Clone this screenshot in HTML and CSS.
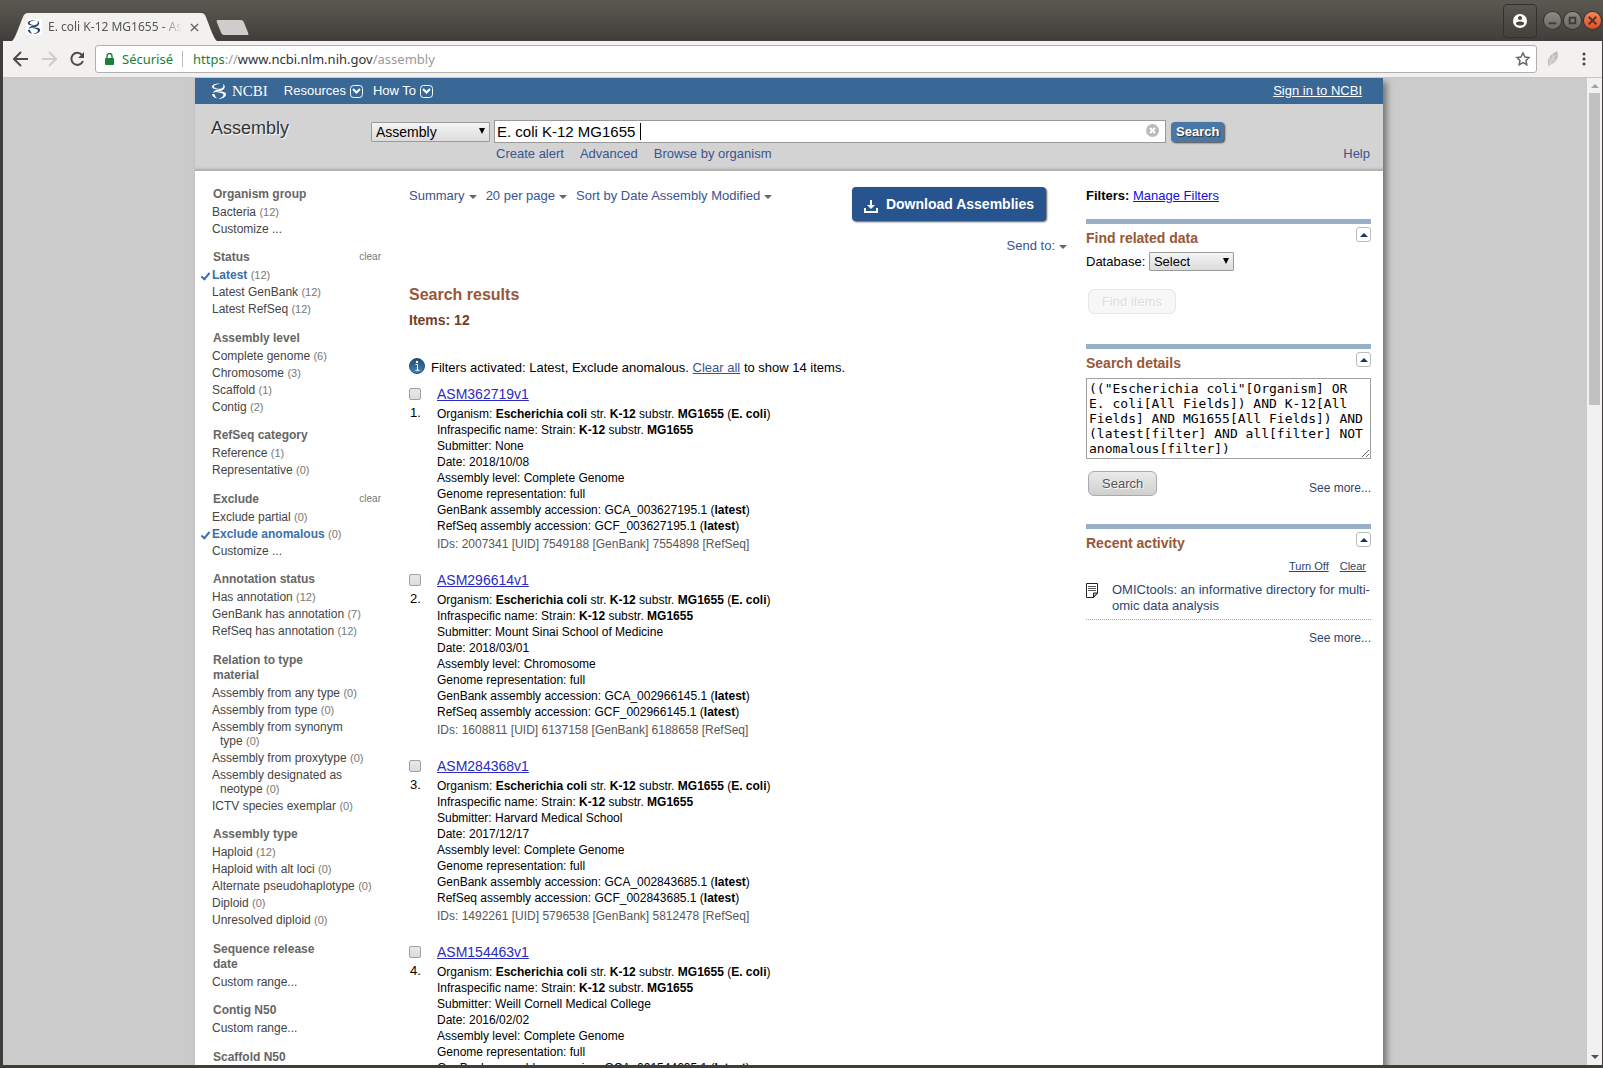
FILE: index.html
```html
<!DOCTYPE html>
<html lang="en">
<head>
<meta charset="UTF-8">
<meta name="viewport" content="width=device-width, initial-scale=1.0">
<title>E. coli K-12 MG1655 - Assembly - NCBI</title>
<link rel="stylesheet" href="styles.css">
</head>
<body>
<svg class="defs" aria-hidden="true">
    <symbol id="helix" viewBox="0 0 16 18">
        <path d="M10 1.500C5 1 1 2.500 1 4.500c0 3 5 3 9 2.500-4-.3-7-1-7-2.500S6 2.300 10 1.500z"/>
        <path d="M12 2c3 1.500 2 5-1 6.500-3 1.300-7 1-9 2.500 1-3 4-3.300 7-4 3-.8 4-2.500 3-5z"/>
        <path d="M5 10c4-1 10-.8 10 2.500 0 2.500-4 4.500-8 4.500 3-1 5.500-2.500 5.500-4 0-2-4-2.500-7.500-3z"/>
        <path d="M1 12c0 2 2 4 5 4.500-1-1.500-2-2-2.500-4.500z"/>
    </symbol>
</svg>

<!-- window frame -->
<header class="titlebar">
    <div class="tab">
        <svg class="tab_shape" viewBox="0 0 205 28" preserveAspectRatio="none"><path d="M0 28 C4 25 9 7 12 2 Q13 0 16 0 H189 Q192 0 193 2 C196 8 201 25 205 28z"/></svg>
        <span class="favicon"><svg><use href="#helix"/></svg></span>
        <span class="tab_title">E. coli K-12 MG1655 - As</span>
        <button class="tab_close" aria-label="Close tab"><svg viewBox="0 0 10 10"><path d="M1 1l8 8M9 1l-8 8"/></svg></button>
    </div>
    <button class="new_tab" aria-label="New tab"></button>
    <div class="win_buttons">
        <button class="profile" aria-label="Profile"><svg viewBox="0 0 14 14"><circle cx="7" cy="7" r="7" fill="#fff"/><circle cx="7" cy="4" r="2" fill="#45443f"/><path d="M3 9c1-2 7-2 8 0v1c-2 2-6 2-8 0z" fill="#45443f"/></svg></button>
        <button class="win" aria-label="Minimize"><svg viewBox="0 0 18 18"><path d="M5 12h8"/></svg></button>
        <button class="win" aria-label="Maximize"><svg viewBox="0 0 18 18"><rect x="6" y="6" width="6" height="6"/></svg></button>
        <button class="win close" aria-label="Close"><svg viewBox="0 0 18 18"><path d="M5 5l8 8M13 5l-8 8"/></svg></button>
    </div>
</header>

<div class="browser">
    <nav class="toolbar">
        <button aria-label="Back"><svg viewBox="0 0 16 16"><path d="M15 8H2M8 1L1 8l7 7"/></svg></button>
        <button class="off" aria-label="Forward"><svg viewBox="0 0 16 16"><path d="M1 8h13M8 1l7 7-7 7"/></svg></button>
        <button class="reload" aria-label="Reload"><svg viewBox="0 0 16 16"><path d="M13 4a6 6 0 1 0 1 6"/><path class="fill" d="M15 1v6H9z"/></svg></button>
        <div class="omnibox">
            <svg class="lock" viewBox="0 0 9 12"><path d="M2 5V3a2 2 0 0 1 5 0v2" fill="none" stroke="#188038" stroke-width="1.4"/><rect y="5" width="9" height="7" rx="1" fill="#188038"/></svg>
            <span class="secure">Sécurisé</span>
            <span class="url"><b>https</b>://<i>www.ncbi.nlm.nih.gov</i>/assembly</span>
            <svg class="star" viewBox="0 0 16 16"><path d="M8 2l2 4 4 .5-3 3 .8 4.200L8 11.500l-3.800 2.200L5 9.500l-3-3L6 6z"/></svg>
        </div>
        <svg class="feather" viewBox="0 0 12 16"><path d="M1 16L1 9C2 5 6 2 10 0c2 5 1 11-7 14z" fill="#bdbdbd"/><path d="M1 16C3 11 6 7 9 4M3 12h4M4 9h5M3 10V6M6 7V3" stroke="#dedede" fill="none"/></svg>
        <button class="menu" aria-label="Menu"><svg viewBox="0 0 4 14"><circle cx="2" cy="2" r="1.500"/><circle cx="2" cy="7" r="1.500"/><circle cx="2" cy="12" r="1.500"/></svg></button>
    </nav>

    <div class="viewport">
        <div class="scroll_area">
        <div class="page">
            <div class="topbar">
                <a class="logo" href="#"><svg><use href="#helix"/></svg>NCBI</a>
                <a href="#">Resources <svg class="drop" viewBox="0 0 13 13"><rect x=".5" y=".5" width="12" height="12" rx="3"/><path d="M3 4l3.500 3.500L10 4"/></svg></a>
                <a href="#">How To <svg class="drop" viewBox="0 0 13 13"><rect x=".5" y=".5" width="12" height="12" rx="3"/><path d="M3 4l3.500 3.500L10 4"/></svg></a>
                <a class="signin" href="#">Sign in to NCBI</a>
            </div>

            <form class="search">
                <h1>Assembly</h1>
                <div class="search_body">
                    <div class="search_row">
                        <span class="select big"><select aria-label="Search database"><option>Assembly</option></select></span>
                        <span class="term">
                            <input type="text" aria-label="Search term" value="E. coli K-12 MG1655 ">
                            <button class="reset" type="button" aria-label="Clear input"><svg viewBox="0 0 13 13"><circle cx="6.500" cy="6.500" r="6.500" fill="#bbb"/><path d="M4 4l5 5M9 4l-5 5" stroke="#fff" stroke-width="2"/></svg></button>
                        </span>
                        <button class="go" type="button">Search</button>
                    </div>
                    <div class="search_links">
                        <a href="#">Create alert</a>
                        <a href="#">Advanced</a>
                        <a href="#">Browse by organism</a>
                        <a class="help" href="#">Help</a>
                    </div>
                </div>
            </form>

            <div class="columns">
                <div class="facets">
                    <section>
                        <h3>Organism group</h3>
                        <ul>
                            <li><a href="#">Bacteria</a>&nbsp;<span>(12)</span></li>
                            <li><a href="#">Customize ...</a></li>
                        </ul>
                    </section>
                    <section>
                        <h3>Status</h3><a class="clear" href="#">clear</a>
                        <ul>
                            <li class="on"><a href="#">Latest</a>&nbsp;<span>(12)</span></li>
                            <li><a href="#">Latest GenBank</a>&nbsp;<span>(12)</span></li>
                            <li><a href="#">Latest RefSeq</a>&nbsp;<span>(12)</span></li>
                        </ul>
                    </section>
                    <section>
                        <h3>Assembly level</h3>
                        <ul>
                            <li><a href="#">Complete genome</a>&nbsp;<span>(6)</span></li>
                            <li><a href="#">Chromosome</a>&nbsp;<span>(3)</span></li>
                            <li><a href="#">Scaffold</a>&nbsp;<span>(1)</span></li>
                            <li><a href="#">Contig</a>&nbsp;<span>(2)</span></li>
                        </ul>
                    </section>
                    <section>
                        <h3>RefSeq category</h3>
                        <ul>
                            <li><a href="#">Reference</a>&nbsp;<span>(1)</span></li>
                            <li><a href="#">Representative</a>&nbsp;<span>(0)</span></li>
                        </ul>
                    </section>
                    <section>
                        <h3>Exclude</h3><a class="clear" href="#">clear</a>
                        <ul>
                            <li><a href="#">Exclude partial</a>&nbsp;<span>(0)</span></li>
                            <li class="on"><a href="#">Exclude anomalous</a>&nbsp;<span>(0)</span></li>
                            <li><a href="#">Customize ...</a></li>
                        </ul>
                    </section>
                    <section>
                        <h3>Annotation status</h3>
                        <ul>
                            <li><a href="#">Has annotation</a>&nbsp;<span>(12)</span></li>
                            <li><a href="#">GenBank has annotation</a>&nbsp;<span>(7)</span></li>
                            <li><a href="#">RefSeq has annotation</a>&nbsp;<span>(12)</span></li>
                        </ul>
                    </section>
                    <section>
                        <h3>Relation to type material</h3>
                        <ul>
                            <li><a href="#">Assembly from any type</a>&nbsp;<span>(0)</span></li>
                            <li><a href="#">Assembly from type</a>&nbsp;<span>(0)</span></li>
                            <li><a href="#">Assembly from synonym type</a>&nbsp;<span>(0)</span></li>
                            <li><a href="#">Assembly from proxytype</a>&nbsp;<span>(0)</span></li>
                            <li><a href="#">Assembly designated as neotype</a>&nbsp;<span>(0)</span></li>
                            <li><a href="#">ICTV species exemplar</a>&nbsp;<span>(0)</span></li>
                        </ul>
                    </section>
                    <section>
                        <h3>Assembly type</h3>
                        <ul>
                            <li><a href="#">Haploid</a>&nbsp;<span>(12)</span></li>
                            <li><a href="#">Haploid with alt loci</a>&nbsp;<span>(0)</span></li>
                            <li><a href="#">Alternate pseudohaplotype</a>&nbsp;<span>(0)</span></li>
                            <li><a href="#">Diploid</a>&nbsp;<span>(0)</span></li>
                            <li><a href="#">Unresolved diploid</a>&nbsp;<span>(0)</span></li>
                        </ul>
                    </section>
                    <section>
                        <h3>Sequence release date</h3>
                        <ul>
                            <li><a href="#">Custom range...</a></li>
                        </ul>
                    </section>
                    <section>
                        <h3>Contig N50</h3>
                        <ul>
                            <li><a href="#">Custom range...</a></li>
                        </ul>
                    </section>
                    <section>
                        <h3>Scaffold N50</h3>
                    </section>
                </div>

                <main class="results">
                    <div class="display_bar">
                        <a class="pop" href="#">Summary</a>
                        <a class="pop" href="#">20 per page</a>
                        <a class="pop" href="#">Sort by Date Assembly Modified</a>
                        <button class="download"><svg viewBox="0 0 14 14"><path d="M1 9v4h12V9" fill="none" stroke="#fff" stroke-width="2"/><path d="M6 1h2v5h3L7 10 3 6h3z" fill="#fff"/></svg>Download Assemblies</button>
                    </div>
                    <div class="send"><a class="pop" href="#">Send to:</a></div>
                    <h2>Search results</h2>
                    <h3>Items: 12</h3>
                    <p class="notice"><svg viewBox="0 0 16 16"><defs><linearGradient id="ig" x2="0" y2="1"><stop stop-color="#1f4a75"/><stop offset="1" stop-color="#4488b5"/></linearGradient></defs><circle cx="8" cy="8" r="7.500" fill="url(#ig)" stroke="#27496b"/><circle cx="8" cy="4" r="1.200" fill="#fff"/><path d="M6.500 6.500h2v5.500M6.500 12.300h4" stroke="#fff" fill="none"/></svg>Filters activated: Latest, Exclude anomalous. <a href="#">Clear all</a> to show 14 items.</p>

                    <article class="rprt">
                        <div class="num"><input type="checkbox" id="r1"><label for="r1">1.</label></div>
                        <div class="rslt">
                            <a class="title" href="#">ASM362719v1</a>
                            <p>Organism: <b>Escherichia coli</b> str. <b>K-12</b> substr. <b>MG1655</b> (<b>E. coli</b>)</p>
                            <p>Infraspecific name: Strain: <b>K-12</b> substr. <b>MG1655</b></p>
                            <p>Submitter: None</p>
                            <p>Date: 2018/10/08</p>
                            <p>Assembly level: Complete Genome</p>
                            <p>Genome representation: full</p>
                            <p>GenBank assembly accession: GCA_003627195.1 (<b>latest</b>)</p>
                            <p>RefSeq assembly accession: GCF_003627195.1 (<b>latest</b>)</p>
                            <p class="ids">IDs: 2007341 [UID] 7549188 [GenBank] 7554898 [RefSeq]</p>
                        </div>
                    </article>
                    <article class="rprt">
                        <div class="num"><input type="checkbox" id="r2"><label for="r2">2.</label></div>
                        <div class="rslt">
                            <a class="title" href="#">ASM296614v1</a>
                            <p>Organism: <b>Escherichia coli</b> str. <b>K-12</b> substr. <b>MG1655</b> (<b>E. coli</b>)</p>
                            <p>Infraspecific name: Strain: <b>K-12</b> substr. <b>MG1655</b></p>
                            <p>Submitter: Mount Sinai School of Medicine</p>
                            <p>Date: 2018/03/01</p>
                            <p>Assembly level: Chromosome</p>
                            <p>Genome representation: full</p>
                            <p>GenBank assembly accession: GCA_002966145.1 (<b>latest</b>)</p>
                            <p>RefSeq assembly accession: GCF_002966145.1 (<b>latest</b>)</p>
                            <p class="ids">IDs: 1608811 [UID] 6137158 [GenBank] 6188658 [RefSeq]</p>
                        </div>
                    </article>
                    <article class="rprt">
                        <div class="num"><input type="checkbox" id="r3"><label for="r3">3.</label></div>
                        <div class="rslt">
                            <a class="title" href="#">ASM284368v1</a>
                            <p>Organism: <b>Escherichia coli</b> str. <b>K-12</b> substr. <b>MG1655</b> (<b>E. coli</b>)</p>
                            <p>Infraspecific name: Strain: <b>K-12</b> substr. <b>MG1655</b></p>
                            <p>Submitter: Harvard Medical School</p>
                            <p>Date: 2017/12/17</p>
                            <p>Assembly level: Complete Genome</p>
                            <p>Genome representation: full</p>
                            <p>GenBank assembly accession: GCA_002843685.1 (<b>latest</b>)</p>
                            <p>RefSeq assembly accession: GCF_002843685.1 (<b>latest</b>)</p>
                            <p class="ids">IDs: 1492261 [UID] 5796538 [GenBank] 5812478 [RefSeq]</p>
                        </div>
                    </article>
                    <article class="rprt">
                        <div class="num"><input type="checkbox" id="r4"><label for="r4">4.</label></div>
                        <div class="rslt">
                            <a class="title" href="#">ASM154463v1</a>
                            <p>Organism: <b>Escherichia coli</b> str. <b>K-12</b> substr. <b>MG1655</b> (<b>E. coli</b>)</p>
                            <p>Infraspecific name: Strain: <b>K-12</b> substr. <b>MG1655</b></p>
                            <p>Submitter: Weill Cornell Medical College</p>
                            <p>Date: 2016/02/02</p>
                            <p>Assembly level: Complete Genome</p>
                            <p>Genome representation: full</p>
                            <p>GenBank assembly accession: GCA_001544635.1 (<b>latest</b>)</p>
                        </div>
                    </article>
                </main>

                <aside class="side">
                    <p class="filters"><b>Filters:</b> <a href="#">Manage Filters</a></p>
                    <section class="portlet related">
                        <div class="portlet_head"><h3>Find related data</h3><button class="toggle" aria-label="Collapse"></button></div>
                        <div class="db"><label for="db">Database:</label> <span class="select"><select id="db"><option>Select</option></select></span></div>
                        <button class="btn" disabled>Find items</button>
                    </section>
                    <section class="portlet details">
                        <div class="portlet_head"><h3>Search details</h3><button class="toggle" aria-label="Collapse"></button></div>
                        <textarea rows="5" aria-label="Search details">(("Escherichia coli"[Organism] OR E. coli[All Fields]) AND K-12[All Fields] AND MG1655[All Fields]) AND (latest[filter] AND all[filter] NOT anomalous[filter])</textarea>
                        <div class="details_foot"><button class="btn">Search</button><a class="more" href="#">See more...</a></div>
                    </section>
                    <section class="portlet">
                        <div class="portlet_head"><h3>Recent activity</h3><button class="toggle" aria-label="Collapse"></button></div>
                        <div class="activity_links"><a href="#">Turn Off</a><a href="#">Clear</a></div>
                        <div class="activity">
                            <svg viewBox="0 0 12 15"><path d="M.5.500h11v9.500l-4 4.500h-7z" fill="#fff" stroke="#222"/><path d="M2 3.500h8M2 5.500h8M2 7.500h8" stroke="#555"/><path d="M11.500 10h-4v4.500z" fill="#bbb" stroke="#222"/></svg>
                            <a href="#">OMICtools: an informative directory for multi-omic data analysis</a>
                        </div>
                        <div class="activity_foot"><a class="more" href="#">See more...</a></div>
                    </section>
                </aside>
            </div>
        </div>
        </div>
        <div class="scrollbar"><i class="up"></i><i class="thumb"></i><i class="down"></i></div>
    </div>
</div>
</body>
</html>
```
FILE: styles.css
```css
* {box-sizing: border-box; margin: 0; padding: 0;}
body {
    height: 100vh;
    display: flex;
    flex-direction: column;
    overflow: hidden;
    background: #3e3d39;
    font: 13px/16px "Liberation Sans", Arial, sans-serif;
    color: #000;
}
button {border: 0; background: none; font: inherit;}
a {color: #3b5391; text-decoration: none;}
li {list-style: none;}
svg {display: block;}
.defs {display: none;}

/* window frame */
.titlebar {
    height: 41px;
    flex: none;
    display: flex;
    align-items: flex-end;
    padding-left: 12px;
    background: linear-gradient(#5a5951, #3f3e3a);
}
.tab {
    width: 205px;
    height: 28px;
    display: flex;
    align-items: center;
    padding: 0 18px 0 14px;
    position: relative;
}
.tab > * {position: relative;}
.tab .tab_shape {
    position: absolute;
    left: 0;
    top: 0;
    width: 100%;
    height: 100%;
    fill: #f2f1f0;
}
.favicon {width: 16px; height: 16px; background: #fff;}
.favicon svg {width: 16px; height: 16px; fill: #23446e;}
.tab_title {
    flex: 1;
    margin: 0 8px 0 6px;
    overflow: hidden;
    white-space: nowrap;
    font: 12px/16px "Noto Sans", sans-serif;
    color: #555;
    -webkit-mask-image: linear-gradient(90deg, #000 85%, transparent);
    mask-image: linear-gradient(90deg, #000 85%, transparent);
}
.tab_close svg {width: 9px; height: 9px; stroke: #666; stroke-width: 1.500;}
.new_tab {
    width: 27px;
    height: 15px;
    margin: 0 0 6px 2px;
    background: #cfcdcb;
    border-radius: 2px;
    transform: skewX(22deg);
}
.win_buttons {
    margin-left: auto;
    height: 41px;
    display: flex;
    align-items: center;
    gap: 3px;
    padding-right: 2px;
}
.profile {
    width: 34px;
    height: 34px;
    margin-right: 4px;
    display: flex;
    align-items: center;
    justify-content: center;
    border: 1px solid #32312d;
    border-radius: 4px;
}
.profile svg {width: 14px; height: 14px;}
.win {
    width: 17px;
    height: 17px;
    border-radius: 50%;
    background: linear-gradient(#8b8a83, #6a6963);
    box-shadow: 0 0 0 1px #35342f;
}
.win svg {fill: none; stroke: #3c3b37; stroke-width: 2;}
.win.close {background: linear-gradient(#f4845a, #df4f24);}

/* browser */
.browser {
    flex: 1;
    min-height: 0;
    display: flex;
    flex-direction: column;
    margin: 0 1px 3px 3px;
}
.toolbar {
    height: 37px;
    flex: none;
    display: flex;
    align-items: center;
    padding: 0 16px 0 10px;
    background: #f2f1f0;
    border-bottom: 1px solid #c8c7c6;
}
.toolbar button {margin-right: 12px;}
.toolbar button.reload {margin-right: 10px;}
.toolbar button svg {
    width: 16px;
    height: 16px;
    fill: none;
    stroke: #4c4c4c;
    stroke-width: 2;
}
.toolbar button.off svg {stroke: #ccc;}
.toolbar button .fill {fill: #4c4c4c; stroke: none;}
.toolbar button.menu {margin: 0;}
.toolbar button.menu svg {width: 4px; height: 14px; fill: #444; stroke: none;}
.omnibox {
    flex: 1;
    height: 28px;
    display: flex;
    align-items: center;
    padding: 0 5px 0 9px;
    background: #fff;
    border: 1px solid #b0b0b0;
    border-radius: 3px;
    font: 13px/20px "Noto Sans", sans-serif;
}
.omnibox .lock {width: 9px; height: 12px;}
.secure {
    margin: 0 10px 0 8px;
    padding-right: 9px;
    line-height: 16px;
    border-right: 1px solid #bbb;
    color: #188038;
}
.url {color: #999;}
.url b {font-weight: normal; color: #188038;}
.url i {font-style: normal; color: #333;}
.star {width: 16px; height: 16px; margin-left: auto; fill: none; stroke: #666; stroke-width: 1.500;}
.feather {width: 12px; height: 16px; margin: 0 23px 0 10px;}

.viewport {flex: 1; min-height: 0; display: flex; background: #cbcbcb;}
.scroll_area {flex: 1; overflow: hidden; padding-right: 12px;}
.scrollbar {
    width: 15px;
    display: flex;
    flex-direction: column;
    align-items: center;
    padding: 6px 2px;
    background: #f1f1f1;
}
.scrollbar .up {border: 4px solid transparent; border-top: 0; border-bottom-color: #a3a3a3;}
.scrollbar .thumb {width: 11px; height: 32%; margin-top: 5px; background: #c1c1c1;}
.scrollbar .down {margin-top: auto; border: 4px solid transparent; border-bottom: 0; border-top-color: #505050;}

/* ncbi page */
.page {
    max-width: 1188px;
    min-height: 100%;
    margin: 0 auto;
    background: #fff;
    box-shadow: 4px 4px 6px #777;
}
.topbar {
    height: 26px;
    display: flex;
    align-items: center;
    gap: 10px;
    padding: 0 21px 0 16px;
    background: #396796;
}
.topbar a {display: flex; align-items: center; gap: 4px; color: #fff;}
.topbar .logo {
    margin-right: 6px;
    gap: 5px;
    font: 15px/16px "Liberation Serif", serif;
}
.logo svg {width: 16px; height: 18px; fill: #fff;}
.drop {width: 13px; height: 13px; fill: none; stroke: #fff;}
.drop path {stroke-width: 2;}
.topbar .signin {margin-left: auto; text-decoration: underline;}

.search {
    height: 67px;
    display: flex;
    padding: 16px 12px 0 16px;
    background: #d3d3d3;
    border-bottom: 1px solid #b0b0b0;
    box-shadow: inset 0 -3px 3px -2px #aaa;
}
.search h1 {
    width: 160px;
    font: 18px/16px "Liberation Sans", Arial, sans-serif;
    color: #333;
    text-shadow: 1px 1px 1px #fff;
}
.search_body {flex: 1;}
.search_row {display: flex; align-items: center;}
.select {position: relative; display: inline-block;}
.select select {
    appearance: none;
    width: 85px;
    height: 19px;
    padding: 0 4px;
    border: 1px solid #9a9a9a;
    border-radius: 1px;
    background: linear-gradient(#f4f4f4, #dcdcdc);
    font: 13px "Liberation Sans", Arial, sans-serif;
    color: #000;
}
.select::after {
    content: "";
    position: absolute;
    right: 5px;
    top: 6px;
    border: 3px solid transparent;
    border-top: 6px solid #000;
    border-bottom: 0;
}
.select.big {margin-right: 4px;}
.select.big select {width: 119px; height: 20px; font-size: 14px; display: block;}
.term {position: relative; flex: 0 1 672px;}
.term input {
    width: 100%;
    height: 23px;
    display: block;
    padding: 0 24px 0 2px;
    border: 1px solid #999;
    background: #fff;
    font: 15px "Liberation Sans", Arial, sans-serif;
    color: #000;
}
/* text cursor */
.term::after {
    content: "";
    position: absolute;
    left: 146px;
    top: 3px;
    width: 1px;
    height: 17px;
    background: #000;
}
.reset {position: absolute; right: 7px; top: 4px;}
.reset svg {width: 13px; height: 13px;}
.go {
    height: 20px;
    margin-left: 5px;
    padding: 0 5px;
    border-radius: 4px;
    background: #4877a8;
    box-shadow: 1px 1px 2px #444;
    font-weight: bold;
    color: #fff;
    text-shadow: 1px 1px 1px #333;
}
.search_links {display: flex; gap: 16px; padding: 3px 1px 0 125px;}
.search_links .help {margin-left: auto;}

.columns {display: flex; padding: 15px 12px 0 17px;}

/* left filters */
.facets {
    width: 197px;
    flex: none;
    padding: 1px 28px 0 0;
    font-size: 12px;
    line-height: 14px;
}
.facets section {position: relative; margin-bottom: 14px;}
.facets h3 {
    width: 112px;
    margin: 0 0 3px 1px;
    font-size: 12px;
    line-height: 15px;
    color: #666;
}
.facets .clear {
    position: absolute;
    right: 0;
    top: 0;
    font-size: 10px;
    color: #777;
}
.facets li {position: relative; margin-bottom: 3px; padding-left: 8px; text-indent: -8px;}
.facets li a {color: #444;}
.facets li span {font-size: 11px; color: #777;}
.facets li.on a {font-weight: bold; color: #3a70a8;}
.facets li.on::before {
    content: "";
    position: absolute;
    left: -9px;
    top: 3px;
    width: 3px;
    height: 7px;
    border: solid #3a70a8;
    border-width: 0 2px 2px 0;
    transform: rotate(40deg);
}
.facets section:nth-child(even) {margin-bottom: 15px;}

/* results */
.results {flex: 1; min-width: 0; padding-bottom: 20px;}
.display_bar {display: flex; align-items: flex-start; gap: 9px; padding-right: 21px;}
.display_bar > a {margin-top: 2px;}
.pop::after {
    content: "";
    display: inline-block;
    margin-left: 4px;
    vertical-align: 1px;
    border: 4px solid transparent;
    border-top-color: #666;
    border-bottom: 0;
}
.download {
    height: 34px;
    margin-left: auto;
    display: flex;
    align-items: center;
    gap: 8px;
    padding: 0 12px;
    margin-top: 1px;
    border-radius: 4px;
    background: #27538f;
    box-shadow: 1px 1px 2px #555;
    font-size: 14px;
    font-weight: bold;
    color: #fff;
}
.download svg {width: 14px; height: 14px; margin-top: 3px;}
.send {margin-top: 17px; text-align: right;}
.results h2 {margin-top: 31px; font-size: 16px; line-height: 20px; color: #985735;}
.results h3 {margin-top: 5px; font-size: 14px; line-height: 20px; color: #724128;}
.notice {display: flex; align-items: center; margin: 30px 0 7px; white-space: pre;}
.notice svg {width: 16px; height: 16px; margin: -5px 6px 0 0;}
.notice a {text-decoration: underline;}
.rprt {display: flex; margin-bottom: 17px;}
.num {width: 28px; display: flex; flex-direction: column;}
.num input {
    appearance: none;
    width: 12px;
    height: 12px;
    margin: 5px 0 5px;
    border: 1px solid #a0a0a0;
    border-radius: 2px;
    background: linear-gradient(#e8e8e8, #dcdcdc);
}
.num label {padding-left: 1px;}
.rslt {flex: 1; font-size: 12px;}
.rslt .title {
    display: block;
    margin-bottom: 1px;
    font-size: 14px;
    line-height: 22px;
    color: #2b2bc0;
    text-decoration: underline;
}
.rslt .ids {margin-top: 2px; color: #575757;}

/* right column */
.side {width: 285px; flex: none; margin-left: 19px;}
.filters {padding: 2px 0 15px;}
.filters a {color: #1111dd; text-decoration: underline;}
.portlet {border-top: 5px solid #97b0c8;}
.portlet_head {display: flex; justify-content: space-between; height: 29px;}
.portlet_head h3 {margin-top: 5px; font-size: 14px; line-height: 18px; color: #985735;}
.toggle {
    width: 15px;
    height: 15px;
    margin-top: 3px;
    display: flex;
    align-items: center;
    justify-content: center;
    border: 1px solid #bbb;
    border-radius: 3px;
    background: #fff;
}
.toggle::before {
    content: "";
    border: 4px solid transparent;
    border-top: 0;
    border-bottom-color: #14336a;
}
.btn {
    height: 25px;
    margin-left: 2px;
    padding: 0 13px;
    border: 1px solid #aaa;
    border-radius: 6px;
    background: linear-gradient(#eaeaea, #cfcfcf);
    color: #555;
    text-shadow: 1px 1px 0 #fff;
}
.btn:disabled {border-color: #e8e8e8; background: #f7f7f7; color: #ddd;}
.related .portlet_head {height: 28px;}
.db {height: 37px;}
.related {padding-bottom: 30px;}
textarea {
    width: 100%;
    display: block;
    padding: 2px;
    overflow: hidden;
    resize: both;
    border: 1px solid #a0a0a0;
    background: #fff;
    font: 13px/15px "DejaVu Sans Mono", monospace;
    color: #000;
}
.details_foot {display: flex; justify-content: space-between; padding: 12px 0 28px;}
.details_foot .more {margin-top: 9px;}
.more {font-size: 12px; color: #2d4570;}
.activity_links {
    display: flex;
    justify-content: flex-end;
    gap: 11px;
    padding-right: 5px;
    font-size: 11px;
}
.activity_links a {color: #2d4570; text-decoration: underline;}
.activity {
    display: flex;
    gap: 14px;
    padding: 8px 0 5px;
    border-bottom: 1px dotted #aaa;
}
.activity svg {width: 12px; height: 15px; flex: none; margin-top: 1px;}
.activity a {color: #2d4570;}
.activity_foot {padding-top: 10px; text-align: right;}
```
